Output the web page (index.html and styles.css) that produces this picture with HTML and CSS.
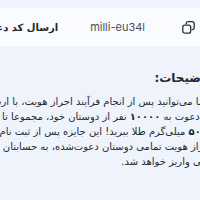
FILE: index.html
```html
<!DOCTYPE html>
<html lang="fa">
<head>
<meta charset="utf-8">
<link rel="stylesheet" href="styles.css">
</head>
<body>
<div class="page">
  <div class="card">
    <span class="copy">
      <svg width="13" height="13" viewBox="0 0 13 13" fill="none" stroke="#2b2f3a" stroke-width="1.3" stroke-linejoin="round">
        <path d="M4.2 3.2V2.6A1.9 1.9 0 0 1 6.1 0.7h4.2a1.9 1.9 0 0 1 1.9 1.9v4.2a1.9 1.9 0 0 1-1.9 1.9h-0.6"/>
        <rect x="0.8" y="4.2" width="7.9" height="7.9" rx="1.9"/>
      </svg>
    </span>
    <span class="code">milli-eu34l</span>
    <span class="send">ارسال کد دعوت</span>
  </div>
  <div class="notes">
    <div class="title">توضیحات:</div>
    <p class="text">
      <span class="line">شما می‌توانید پس از انجام فرآیند احراز هویت، با ارسال</span>
      <span class="line">کد دعوت به <b>۱۰۰۰۰</b> نفر از دوستان خود، مجموعا تا</span>
      <span class="line"><b>۵۰۰۰</b> میلی‌گرم طلا ببرید! این جایزه پس از ثبت نام و</span>
      <span class="line">احراز هویت تمامی دوستان دعوت‌شده، به حسابتان در</span>
      <span class="line">میلی واریز خواهد شد.</span>
    </p>
  </div>
</div>
</body>
</html>
```
FILE: styles.css
```css
html, body {
  margin: 0;
  padding: 0;
  background: #eef3fc;
  overflow: hidden;
}
.page {
  width: 240px;
  margin-left: -30px;
  direction: rtl;
  padding-top: 8px;
  font-family: "DejaVu Sans", sans-serif;
}
.card {
  background: #fafbfe;
  height: 38px;
  display: flex;
  align-items: center;
  padding: 0 15px 0 10px;
}
.copy {
  display: flex;
  width: 13px;
  height: 13px;
}
.code {
  direction: ltr;
  margin-right: 37px;
  font-family: "Inter", sans-serif;
  font-size: 11px;
  color: #4a4d57;
}
.send {
  margin-right: auto;
  font-size: 10px;
  font-weight: bold;
  color: #23262f;
}
.notes {
  padding: 24px 0 0 10px;
  margin-right: -3px;
}
.title {
  font-size: 12px;
  font-weight: bold;
  color: #23262f;
  line-height: 16px;
}
.text {
  margin: 8px 0 0;
  font-size: 10px;
  line-height: 15px;
  color: #262931;
}
.line {
  display: block;
  white-space: nowrap;
}
```
